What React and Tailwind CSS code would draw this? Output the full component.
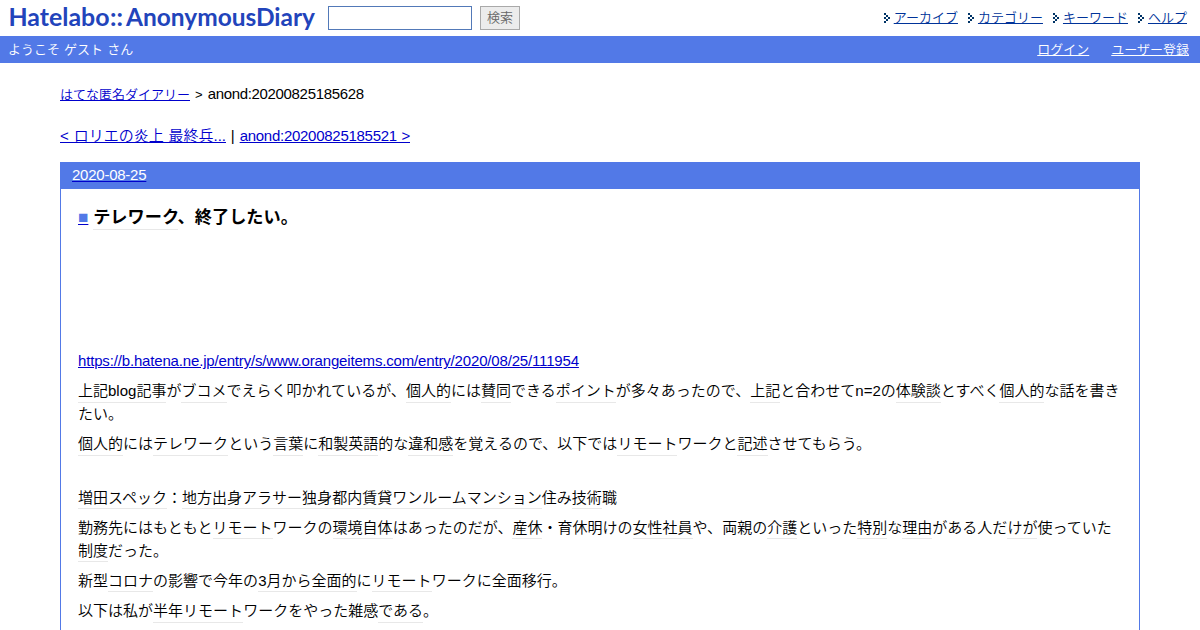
import React from 'react';

const navLinks = ['アーカイブ', 'カテゴリー', 'キーワード', 'ヘルプ'];

// [[...]] marks a keyword link
const paragraphs = [
  '[[上記blog記事]]が[[ブコメ]]でえらく叩かれているが、[[個人的]]には[[賛同]]できる[[ポイント]]が多々あったので、[[上記]]と合わせてn=2の[[体験談]]とすべく[[個人的]]な話を書きたい。',
  '[[個人的]]には[[テレワーク]]という[[言葉]]に[[和製英語]]的な[[違和感]]を覚えるので、以下では[[リモート]]ワークと[[記述]]させてもらう。',
  '',
  '[[増田スペック]]：[[地方出身アラサー独身都内賃貸ワンルームマンション]]住み[[技術]]職',
  '勤務先にはもともと[[リモート]]ワークの[[環境自体]]はあったのだが、[[産休]]・育休明けの[[女性社員]]や、両親の[[介護]]といった[[特別]]な[[理由]]がある人だ[[けが]]使っていた[[制度]]だった。',
  '新型[[コロナ]]の影響で今年の[[3月から全面的]]に[[リモート]]ワークに全面移行。',
  '以下は私が[[半年リモート]]ワークをやった雑感[[である]]。',
];

const Arrow = () => (
  <svg width="7" height="10" viewBox="0 0 7 10" fill="#003366" shapeRendering="crispEdges" className="shrink-0">
    <path d="M0 0h2v2h-2zM2 2h2v2h-2zM4 4h2v2h-2zM2 6h2v2h-2zM0 8h2v2h-2zM0 4h2v2h-2z" />
  </svg>
);

const Logo = () => (
  <svg width="308" height="36" viewBox="0 0 308 36" className="shrink-0 font-['Lato'] font-bold" fill="#2244bb">
    <text x="0.5" y="26" fontSize="24" textLength="101" lengthAdjust="spacingAndGlyphs">Hatelabo</text>
    <text x="102" y="26" fontSize="24" textLength="13" lengthAdjust="spacingAndGlyphs">::</text>
    <text x="118" y="26" fontSize="24" textLength="189" lengthAdjust="spacingAndGlyphs">AnonymousDiary</text>
  </svg>
);

const Keywords = ({ text }) =>
  text.split(/\[\[|\]\]/).map((part, i) =>
    i % 2 ? <a key={i} className="border-b border-[#e8e8e8] pb-[2.5px]">{part}</a> : part
  );

export default function App() {
  return (
    <div className="h-[630px] overflow-hidden flex flex-col bg-white text-black text-[15px] leading-[22.8px] font-['Liberation_Sans','Noto_Sans_CJK_JP',sans-serif] font-[350]">
      <header className="h-9 shrink-0 flex items-center pl-2 pr-[13px] text-[13px]">
        <Logo />
        <input className="ml-3 w-36 h-6 border border-[#5279b8] bg-white" />
        <button className="ml-2 w-10 h-6 border border-[#a9a9a9] bg-[#ececec] text-[#666] text-[13px] leading-5">検索</button>
        <nav className="ml-auto flex gap-[10px]">
          {navLinks.map((label) => (
            <span key={label} className="flex items-center gap-[3px]">
              <Arrow />
              <a className="underline text-[#003399]">{label}</a>
            </span>
          ))}
        </nav>
      </header>

      <div className="h-[27px] shrink-0 bg-[#5279e7] text-white text-[13px] flex items-center justify-between pt-0.5 pl-2 pr-[11px]">
        <span className="[word-spacing:0.5px]">ようこそ ゲスト さん</span>
        <span className="flex gap-[22px]">
          <a className="underline">ログイン</a>
          <a className="underline">ユーザー登録</a>
        </span>
      </div>

      <main className="flex-1 min-h-0 flex flex-col px-[60px]">
        <p className="shrink-0 pt-5 text-[13px] [word-spacing:1.4px]">
          <a className="underline text-[#0000cc]">はてな匿名ダイアリー</a> &gt;{' '}
          <span className="text-[15px] tracking-[-0.33px]">anond:20200825185628</span>
        </p>
        <p className="shrink-0 mt-[18px] [word-spacing:0.7px]">
          <a className="underline text-[#0000cc]">&lt; ロリエの炎上 最終兵...</a> |{' '}
          <a className="underline text-[#0000cc] tracking-[-0.27px]">anond:20200825185521 &gt;</a>
        </p>

        <article className="flex-1 mt-[14px] border border-b-0 border-[#5279e7]">
          <h2 className="h-[26px] bg-[#5279e7] pl-[11px] leading-6 tracking-[-0.24px] text-white underline decoration-[#0000cc]">2020-08-25</h2>
          <div className="px-[17px]">
            <h3 className="mt-4 text-[17.2px] leading-[25px] font-bold">
              <a className="text-[#5279e7] underline decoration-[#0000cc]">■</a>{' '}
              <Keywords text="[[テレワーク]]、終了したい。" />
            </h3>
            <div className="mt-[120.5px]">
              <a className="underline text-[#0000cc] tracking-[-0.165px]">https://b.hatena.ne.jp/entry/s/www.orangeitems.com/entry/2020/08/25/111954</a>
            </div>
            {paragraphs.map((text, i) => (
              <p key={i} className={text ? 'mt-[7.5px] tracking-[0.01px]' : 'h-[22.8px]'}>
                <Keywords text={text} />
              </p>
            ))}
          </div>
        </article>
      </main>
    </div>
  );
}
